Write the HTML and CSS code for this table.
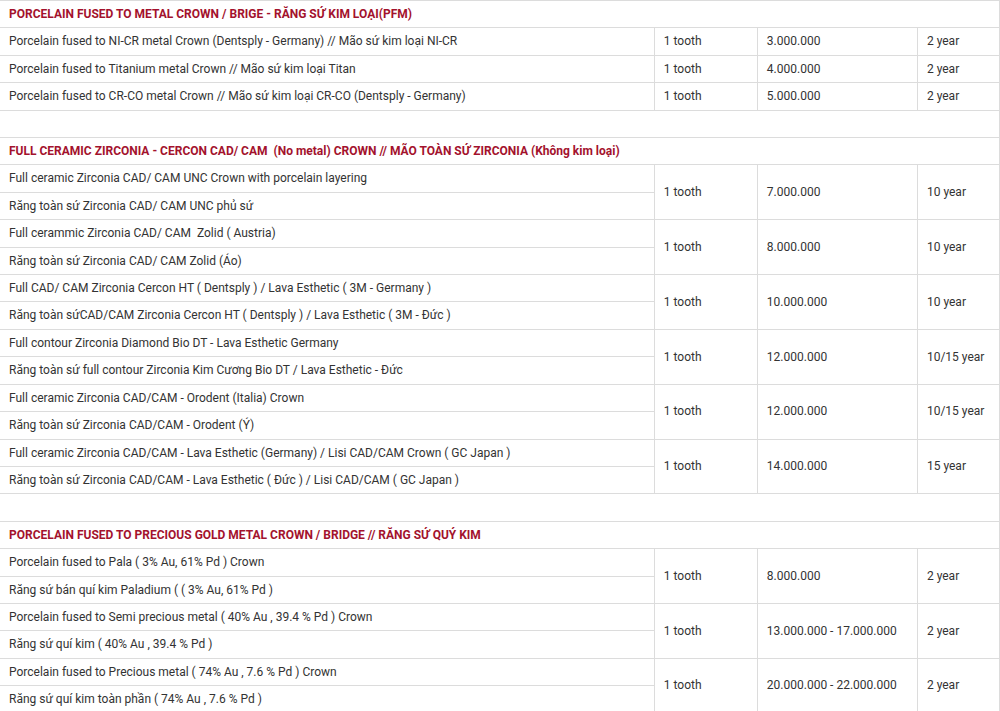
FILE: index.html
```html
<!DOCTYPE html>
<html>
<head>
<meta charset="utf-8">
<link rel="stylesheet" href="styles.css">
</head>
<body>
<table class="price">
<colgroup><col class="c1"><col class="c2"><col class="c3"><col class="c4"></colgroup>
<tbody>
<tr><td colspan="4" class="head">PORCELAIN FUSED TO METAL CROWN / BRIGE - RĂNG SỨ KIM LOẠI(PFM)</td></tr>
<tr><td>Porcelain fused to NI-CR metal Crown (Dentsply - Germany) // Mão sứ kim loại NI-CR</td><td>1 tooth</td><td>3.000.000</td><td>2 year</td></tr>
<tr><td>Porcelain fused to Titanium metal Crown // Mão sứ kim loại Titan</td><td>1 tooth</td><td>4.000.000</td><td>2 year</td></tr>
<tr><td>Porcelain fused to CR-CO metal Crown // Mão sứ kim loại CR-CO (Dentsply - Germany)</td><td>1 tooth</td><td>5.000.000</td><td>2 year</td></tr>
<tr><td colspan="4" class="blank">&nbsp;</td></tr>
<tr><td colspan="4" class="head">FULL CERAMIC ZIRCONIA - CERCON CAD/ CAM&nbsp; (No metal) CROWN // MÃO TOÀN SỨ ZIRCONIA (Không kim loại)</td></tr>
<tr><td>Full ceramic Zirconia CAD/ CAM UNC Crown with porcelain layering</td><td rowspan="2">1 tooth</td><td rowspan="2">7.000.000</td><td rowspan="2">10 year</td></tr>
<tr><td>Răng toàn sứ Zirconia CAD/ CAM UNC phủ sứ</td></tr>
<tr><td>Full cerammic Zirconia CAD/ CAM&nbsp; Zolid ( Austria)</td><td rowspan="2">1 tooth</td><td rowspan="2">8.000.000</td><td rowspan="2">10 year</td></tr>
<tr><td>Răng toàn sứ Zirconia CAD/ CAM Zolid (Áo)</td></tr>
<tr><td>Full CAD/ CAM Zirconia Cercon HT ( Dentsply ) / Lava Esthetic ( 3M - Germany )</td><td rowspan="2">1 tooth</td><td rowspan="2">10.000.000</td><td rowspan="2">10 year</td></tr>
<tr><td>Răng toàn sứCAD/CAM Zirconia Cercon HT ( Dentsply ) / Lava Esthetic ( 3M - Đức )</td></tr>
<tr><td>Full contour Zirconia Diamond Bio DT - Lava Esthetic Germany</td><td rowspan="2">1 tooth</td><td rowspan="2">12.000.000</td><td rowspan="2">10/15 year</td></tr>
<tr><td>Răng toàn sứ full contour Zirconia Kim Cương Bio DT / Lava Esthetic - Đức</td></tr>
<tr><td>Full ceramic Zirconia CAD/CAM - Orodent (Italia) Crown</td><td rowspan="2">1 tooth</td><td rowspan="2">12.000.000</td><td rowspan="2">10/15 year</td></tr>
<tr><td>Răng toàn sứ Zirconia CAD/CAM - Orodent (Ý)</td></tr>
<tr><td>Full ceramic Zirconia CAD/CAM - Lava Esthetic (Germany) / Lisi CAD/CAM Crown ( GC Japan )</td><td rowspan="2">1 tooth</td><td rowspan="2">14.000.000</td><td rowspan="2">15 year</td></tr>
<tr><td>Răng toàn sứ Zirconia CAD/CAM - Lava Esthetic ( Đức ) / Lisi CAD/CAM ( GC Japan )</td></tr>
<tr><td colspan="4" class="blank">&nbsp;</td></tr>
<tr><td colspan="4" class="head">PORCELAIN FUSED TO PRECIOUS GOLD METAL CROWN / BRIDGE // RĂNG SỨ QUÝ KIM</td></tr>
<tr><td>Porcelain fused to Pala ( 3% Au, 61% Pd ) Crown</td><td rowspan="2">1 tooth</td><td rowspan="2">8.000.000</td><td rowspan="2">2 year</td></tr>
<tr><td>Răng sứ bán quí kim Paladium ( ( 3% Au, 61% Pd )</td></tr>
<tr><td>Porcelain fused to Semi precious metal ( 40% Au , 39.4 % Pd ) Crown</td><td rowspan="2">1 tooth</td><td rowspan="2">13.000.000 - 17.000.000</td><td rowspan="2">2 year</td></tr>
<tr><td>Răng sứ quí kim ( 40% Au , 39.4 % Pd )</td></tr>
<tr><td>Porcelain fused to Precious metal ( 74% Au , 7.6 % Pd ) Crown</td><td rowspan="2">1 tooth</td><td rowspan="2">20.000.000 - 22.000.000</td><td rowspan="2">2 year</td></tr>
<tr><td>Răng sứ quí kim toàn phần ( 74% Au , 7.6 % Pd )</td></tr>
</tbody>
</table>
</body>
</html>
```

FILE: styles.css
```css
html, body {
  margin: 0;
  padding: 0;
  background: #fff;
}
body {
  font-family: Roboto, "Liberation Sans", sans-serif;
  font-size: 12px;
  color: #333;
}
.price {
  border-collapse: collapse;
  width: 1000px;
  table-layout: fixed;
}
.c1 { width: 654px; }
.c2 { width: 103px; }
.c3 { width: 160px; }
.c4 { width: 82px; }
.price td {
  border: 1px solid #dcdcdc;
  padding: 3px 9px;
  line-height: 20.4px;
  height: 20.4px;
  vertical-align: middle;
  white-space: nowrap;
  overflow: hidden;
}
.price tr td:first-child {
  border-left: 0;
}
.price td.head {
  color: #a3122d;
  font-weight: bold;
}
```
